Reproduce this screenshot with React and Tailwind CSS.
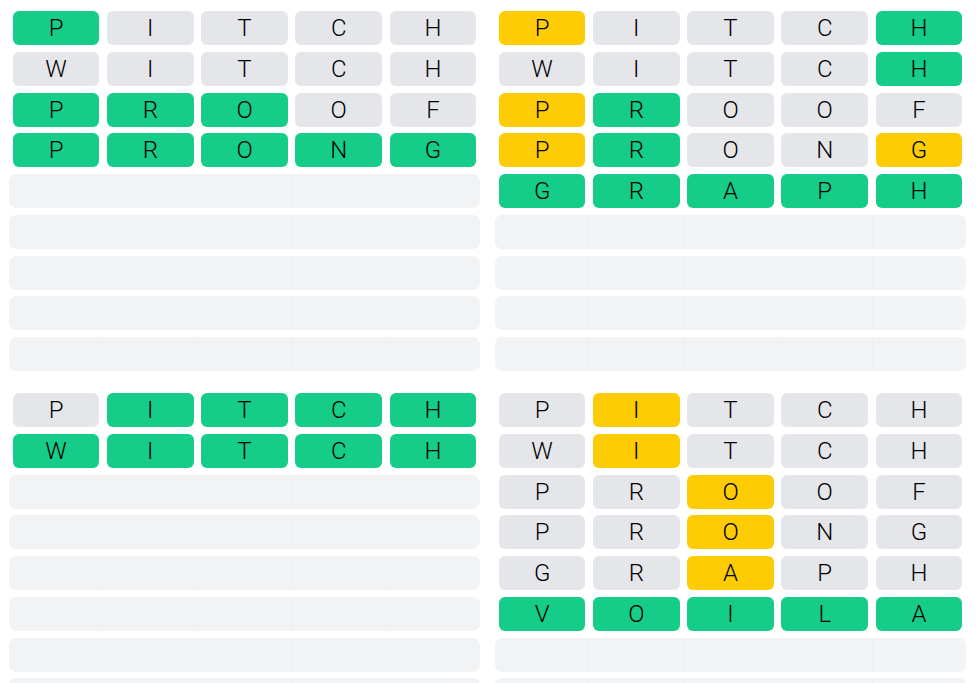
import React from "react";

// g = green (correct), y = yellow (present), x = gray (absent)
const boards = [
  {
    rows: [
      ["PITCH", "gxxxx"],
      ["WITCH", "xxxxx"],
      ["PROOF", "gggxx"],
      ["PRONG", "ggggg"],
    ],
  },
  {
    rows: [
      ["PITCH", "yxxxg"],
      ["WITCH", "xxxxg"],
      ["PROOF", "ygxxx"],
      ["PRONG", "ygxxy"],
      ["GRAPH", "ggggg"],
    ],
  },
  {
    rows: [
      ["PITCH", "xgggg"],
      ["WITCH", "ggggg"],
    ],
  },
  {
    rows: [
      ["PITCH", "xyxxx"],
      ["WITCH", "xyxxx"],
      ["PROOF", "xxyxx"],
      ["PRONG", "xxyxx"],
      ["GRAPH", "xxyxx"],
      ["VOILA", "ggggg"],
    ],
  },
];

const tileColors = {
  g: "bg-[#15cd89]",
  y: "bg-[#fecc05]",
  x: "bg-[#e5e6ea]",
};

function Tile({ letter, state }) {
  return (
    <div className="flex-1 h-full px-[3.8px]">
      <div
        className={`h-full rounded-[6px] flex items-center justify-center text-[24px] font-light leading-none text-black ${tileColors[state]}`}
      >
        {letter}
      </div>
    </div>
  );
}

function EmptyRow() {
  return (
    <div className="flex h-[34px]">
      {[0, 1, 2, 3, 4].map((i) => (
        <div
          key={i}
          className={`flex-1 h-full bg-[#f2f3f5] ${i === 0 ? "rounded-l-[7px]" : "border-l border-[#eeeff1]"} ${i === 4 ? "rounded-r-[7px]" : ""}`}
        />
      ))}
    </div>
  );
}

function Board({ rows }) {
  const empties = 9 - rows.length;
  return (
    <div className="flex flex-col gap-[6.75px]">
      {rows.map(([word, states], r) => (
        <div key={r} className="flex h-[34px]">
          {word.split("").map((ch, i) => (
            <Tile key={i} letter={ch} state={states[i]} />
          ))}
        </div>
      ))}
      {Array.from({ length: empties }).map((_, i) => (
        <EmptyRow key={i} />
      ))}
    </div>
  );
}

export default function App() {
  return (
    <div
      className="w-[980px] h-[683px] overflow-hidden bg-white pl-[9px] pt-[11px]"
      style={{ fontFamily: "Roboto, 'Noto Sans', sans-serif" }}
    >
      <div className="grid grid-cols-[471px_471px] gap-x-[15px] gap-y-[22px]">
        {boards.map((b, i) => (
          <Board key={i} rows={b.rows} />
        ))}
      </div>
    </div>
  );
}
